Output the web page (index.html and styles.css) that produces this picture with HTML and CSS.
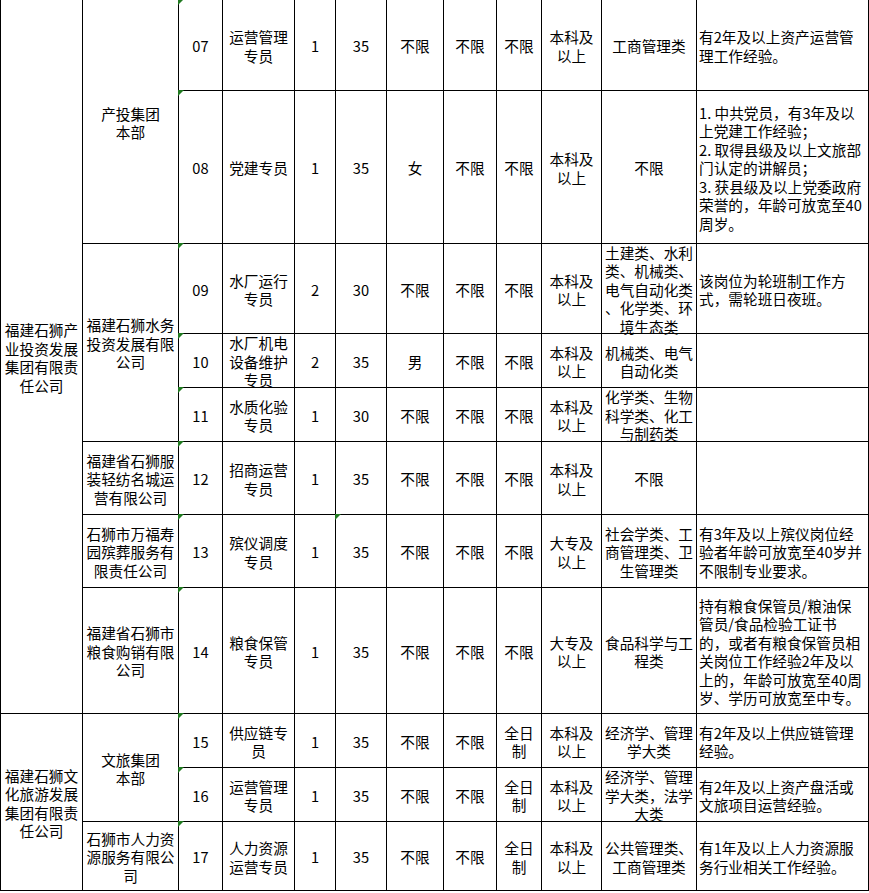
FILE: index.html
```html
<!DOCTYPE html>
<html lang="zh-CN">
<head>
<meta charset="utf-8">
<title>岗位表</title>
<link rel="stylesheet" href="styles.css">
</head>
<body>
<div class="sheet">
  <!-- 07 -->
  <div class="c r8"><span>福建石狮产<br>业投资发展<br>集团有限责<br>任公司</span></div>
  <div class="c r2"><span>产投集团<br>本部</span></div>
  <div class="c tri"><span>07</span></div>
  <div class="c"><span>运营管理<br>专员</span></div>
  <div class="c"><span>1</span></div>
  <div class="c"><span>35</span></div>
  <div class="c"><span>不限</span></div>
  <div class="c"><span>不限</span></div>
  <div class="c"><span>不限</span></div>
  <div class="c"><span>本科及<br>以上</span></div>
  <div class="c"><span>工商管理类</span></div>
  <div class="c d"><span>有2年及以上资产运营管<br>理工作经验。</span></div>
  <!-- 08 -->
  <div class="c tri"><span>08</span></div>
  <div class="c"><span>党建专员</span></div>
  <div class="c"><span>1</span></div>
  <div class="c"><span>35</span></div>
  <div class="c"><span>女</span></div>
  <div class="c"><span>不限</span></div>
  <div class="c"><span>不限</span></div>
  <div class="c"><span>本科及<br>以上</span></div>
  <div class="c"><span>不限</span></div>
  <div class="c d"><span>1. 中共党员，有3年及以<br>上党建工作经验；<br>2. 取得县级及以上文旅部<br>门认定的讲解员；<br>3. 获县级及以上党委政府<br>荣誉的，年龄可放宽至40<br>周岁。</span></div>
  <!-- 09 -->
  <div class="c r3"><span>福建石狮水务<br>投资发展有限<br>公司</span></div>
  <div class="c tri"><span>09</span></div>
  <div class="c"><span>水厂运行<br>专员</span></div>
  <div class="c"><span>2</span></div>
  <div class="c"><span>30</span></div>
  <div class="c"><span>不限</span></div>
  <div class="c"><span>不限</span></div>
  <div class="c"><span>不限</span></div>
  <div class="c"><span>本科及<br>以上</span></div>
  <div class="c"><span>土建类、水利<br>类、机械类、<br>电气自动化类<br>、化学类、环<br>境生态类</span></div>
  <div class="c d"><span>该岗位为轮班制工作方<br>式，需轮班日夜班。</span></div>
  <!-- 10 -->
  <div class="c tri"><span>10</span></div>
  <div class="c"><span>水厂机电<br>设备维护<br>专员</span></div>
  <div class="c"><span>2</span></div>
  <div class="c"><span>35</span></div>
  <div class="c"><span>男</span></div>
  <div class="c"><span>不限</span></div>
  <div class="c"><span>不限</span></div>
  <div class="c"><span>本科及<br>以上</span></div>
  <div class="c"><span>机械类、电气<br>自动化类</span></div>
  <div class="c d"><span></span></div>
  <!-- 11 -->
  <div class="c tri"><span>11</span></div>
  <div class="c"><span>水质化验<br>专员</span></div>
  <div class="c"><span>1</span></div>
  <div class="c"><span>30</span></div>
  <div class="c"><span>不限</span></div>
  <div class="c"><span>不限</span></div>
  <div class="c"><span>不限</span></div>
  <div class="c"><span>本科及<br>以上</span></div>
  <div class="c"><span>化学类、生物<br>科学类、化工<br>与制药类</span></div>
  <div class="c d"><span></span></div>
  <!-- 12 -->
  <div class="c"><span>福建省石狮服<br>装轻纺名城运<br>营有限公司</span></div>
  <div class="c tri"><span>12</span></div>
  <div class="c"><span>招商运营<br>专员</span></div>
  <div class="c"><span>1</span></div>
  <div class="c"><span>35</span></div>
  <div class="c"><span>不限</span></div>
  <div class="c"><span>不限</span></div>
  <div class="c"><span>不限</span></div>
  <div class="c"><span>本科及<br>以上</span></div>
  <div class="c"><span>不限</span></div>
  <div class="c d"><span></span></div>
  <!-- 13 -->
  <div class="c"><span>石狮市万福寿<br>园殡葬服务有<br>限责任公司</span></div>
  <div class="c tri"><span>13</span></div>
  <div class="c"><span>殡仪调度<br>专员</span></div>
  <div class="c"><span>1</span></div>
  <div class="c tri"><span>35</span></div>
  <div class="c"><span>不限</span></div>
  <div class="c"><span>不限</span></div>
  <div class="c"><span>不限</span></div>
  <div class="c"><span>大专及<br>以上</span></div>
  <div class="c"><span>社会学类、工<br>商管理类、卫<br>生管理类</span></div>
  <div class="c d"><span>有3年及以上殡仪岗位经<br>验者年龄可放宽至40岁并<br>不限制专业要求。</span></div>
  <!-- 14 -->
  <div class="c"><span>福建省石狮市<br>粮食购销有限<br>公司</span></div>
  <div class="c tri"><span>14</span></div>
  <div class="c"><span>粮食保管<br>专员</span></div>
  <div class="c"><span>1</span></div>
  <div class="c"><span>35</span></div>
  <div class="c"><span>不限</span></div>
  <div class="c"><span>不限</span></div>
  <div class="c"><span>不限</span></div>
  <div class="c"><span>大专及<br>以上</span></div>
  <div class="c"><span>食品科学与工<br>程类</span></div>
  <div class="c d"><span>持有粮食保管员/粮油保<br>管员/食品检验工证书<br>的，或者有粮食保管员相<br>关岗位工作经验2年及以<br>上的，年龄可放宽至40周<br>岁、学历可放宽至中专。</span></div>
  <!-- 15 -->
  <div class="c r3"><span>福建石狮文<br>化旅游发展<br>集团有限责<br>任公司</span></div>
  <div class="c r2"><span>文旅集团<br>本部</span></div>
  <div class="c tri"><span>15</span></div>
  <div class="c"><span>供应链专<br>员</span></div>
  <div class="c"><span>1</span></div>
  <div class="c"><span>35</span></div>
  <div class="c"><span>不限</span></div>
  <div class="c"><span>不限</span></div>
  <div class="c"><span>全日<br>制</span></div>
  <div class="c"><span>本科及<br>以上</span></div>
  <div class="c"><span>经济学、管理<br>学大类</span></div>
  <div class="c d"><span>有2年及以上供应链管理<br>经验。</span></div>
  <!-- 16 -->
  <div class="c tri"><span>16</span></div>
  <div class="c"><span>运营管理<br>专员</span></div>
  <div class="c"><span>1</span></div>
  <div class="c"><span>35</span></div>
  <div class="c"><span>不限</span></div>
  <div class="c"><span>不限</span></div>
  <div class="c"><span>全日<br>制</span></div>
  <div class="c"><span>本科及<br>以上</span></div>
  <div class="c"><span>经济学、管理<br>学大类，法学<br>大类</span></div>
  <div class="c d"><span>有2年及以上资产盘活或<br>文旅项目运营经验。</span></div>
  <!-- 17 -->
  <div class="c"><span>石狮市人力资<br>源服务有限公<br>司</span></div>
  <div class="c tri"><span>17</span></div>
  <div class="c"><span>人力资源<br>运营专员</span></div>
  <div class="c"><span>1</span></div>
  <div class="c"><span>35</span></div>
  <div class="c"><span>不限</span></div>
  <div class="c"><span>不限</span></div>
  <div class="c"><span>全日<br>制</span></div>
  <div class="c"><span>本科及<br>以上</span></div>
  <div class="c"><span>公共管理类、<br>工商管理类</span></div>
  <div class="c d"><span>有1年及以上人力资源服<br>务行业相关工作经验。</span></div>
</div>
</body>
</html>
```
FILE: styles.css
```css
html, body {
  margin: 0;
  padding: 0;
  background: #fff;
}

.sheet {
  display: grid;
  grid-template-columns: 82px 96px 44px 72px 41px 51px 57px 53px 45px 60px 95px 172px;
  grid-template-rows: 91px 153px 90px 54px 54px 73px 73px 126px 54px 54px 69px;
  width: max-content;
  border-left: 1px solid #000;
  font-family: "Noto Sans CJK SC", "Noto Sans", sans-serif;
  font-size: 14.67px;
  line-height: 18.5px;
  color: #000;
}

.c {
  box-sizing: border-box;
  border-right: 1px solid #000;
  border-bottom: 1px solid #000;
  display: flex;
  align-items: center;
  justify-content: center;
  text-align: center;
  white-space: nowrap;
  min-width: 0;
  min-height: 0;
}

.c > span {
  display: block;
  padding-top: 3px;
}

.d {
  justify-content: flex-start;
  text-align: left;
  padding-left: 2px;
}

.r2 { grid-row: span 2; }
.r3 { grid-row: span 3; }
.r8 { grid-row: span 8; }

.tri {
  position: relative;
}

.tri::before {
  content: "";
  position: absolute;
  top: -1px;
  left: -1px;
  width: 0;
  height: 0;
  border-top: 6px solid #217a21;
  border-right: 6px solid transparent;
}
```
